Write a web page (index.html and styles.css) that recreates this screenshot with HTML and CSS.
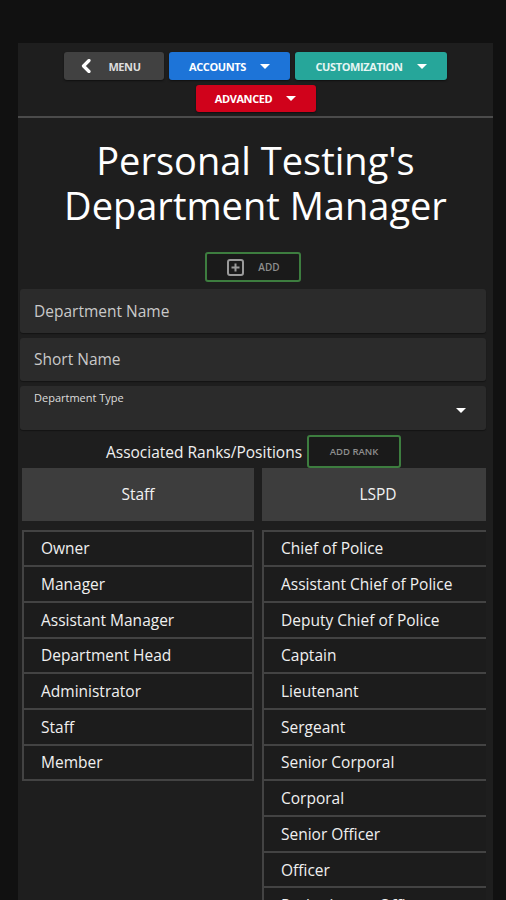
FILE: index.html
```html
<!DOCTYPE html>
<html>
	<head>
		<meta charset="utf-8" />
		<title>Department Manager</title>
		<link rel="stylesheet" href="styles.css">
	</head>
	<body>
		<div class="panel">
			<div class="nav">
				<div class="navBtn menu">
					<svg class="chev" width="10" height="14" viewBox="0 0 10 14"><path d="M8 1.5 L2.5 7 L8 12.5" fill="none" stroke="#fff" stroke-width="3.2" stroke-linejoin="round" stroke-linecap="round"/></svg>
					<span>Menu</span>
				</div>
				<div class="navBtn accounts"><span>Accounts</span><i class="caret"></i></div>
				<div class="navBtn custom"><span>Customization</span><i class="caret"></i></div>
				<div class="navBtn advanced"><span>Advanced</span><i class="caret"></i></div>
			</div>
			<div class="rule"></div>
			<h1 class="title">Personal Testing's<br>Department Manager</h1>
			<div class="addRow">
				<div class="addBtn">
					<svg width="17" height="17" viewBox="0 0 17 17"><rect x="1" y="1" width="15" height="15" rx="2" fill="none" stroke="#9a9a9a" stroke-width="2"/><path d="M8.5 4.5 V12.5 M4.5 8.5 H12.5" stroke="#9a9a9a" stroke-width="2"/></svg>
					<span>Add</span>
				</div>
			</div>
			<div class="fields">
				<div class="field">Department Name</div>
				<div class="field">Short Name</div>
				<div class="field select">
					<span class="label">Department Type</span>
					<i class="caret"></i>
				</div>
			</div>
			<div class="ranksRow">
				<span>Associated Ranks/Positions</span>
				<div class="rankBtn">Add Rank</div>
			</div>
			<div class="columns">
				<div class="col">
					<div class="colHead">Staff</div>
					<div class="list">
						<div class="item">Owner</div>
						<div class="item">Manager</div>
						<div class="item">Assistant Manager</div>
						<div class="item">Department Head</div>
						<div class="item">Administrator</div>
						<div class="item">Staff</div>
						<div class="item">Member</div>
					</div>
				</div>
				<div class="col">
					<div class="colHead">LSPD</div>
					<div class="list">
						<div class="item">Chief of Police</div>
						<div class="item">Assistant Chief of Police</div>
						<div class="item">Deputy Chief of Police</div>
						<div class="item">Captain</div>
						<div class="item">Lieutenant</div>
						<div class="item">Sergeant</div>
						<div class="item">Senior Corporal</div>
						<div class="item">Corporal</div>
						<div class="item">Senior Officer</div>
						<div class="item">Officer</div>
						<div class="item">Probationary Officer</div>
						<div class="item">Cadet</div>
					</div>
				</div>
			</div>
		</div>
	</body>
</html>
```

FILE: styles.css
```css
*,
*::before,
*::after{
	box-sizing: border-box;
}
html,body{
	margin: 0;
	background: #111111;
	font-family: "Open Sans", "Noto Sans", sans-serif;
	color: #eeeeee;
}
.panel{
	width: 475px;
	margin: 43px 0 0 18px;
	background: #1e1e1e;
	padding-bottom: 40px;
}
.nav{
	display: flex;
	flex-wrap: wrap;
	justify-content: center;
	gap: 5px;
	padding: 9px 40px 0;
}
.navBtn{
	height: 28px;
	border-radius: 3px;
	display: flex;
	align-items: center;
	justify-content: center;
	gap: 14px;
	font-size: 11px;
	font-weight: 700;
	text-transform: uppercase;
	letter-spacing: -0.4px;
	color: #ffffff;
	box-shadow: 0 1px 2px rgba(0,0,0,.5);
}
.navBtn.menu{
	width: 100px;
	background: #414141;
	color: #dddddd;
	gap: 17px;
	padding-right: 6px;
}
.navBtn.accounts{
	width: 121px;
	background: #1d74d8;
}
.navBtn.custom{
	width: 152px;
	background: #26a69a;
	color: #e6f5f3;
}
.navBtn.advanced{
	width: 120px;
	height: 27px;
	background: #d0021b;
}
.caret{
	display: inline-block;
	width: 0;
	height: 0;
	border-left: 5px solid transparent;
	border-right: 5px solid transparent;
	border-top: 5px solid #ffffff;
}
.rule{
	height: 2px;
	background: #4b4b4b;
	margin-top: 4px;
}
.title{
	margin: 20px 0 0;
	text-align: center;
	font-size: 38px;
	line-height: 45px;
	font-weight: 400;
	color: #ffffff;
}
.addRow{
	display: flex;
	justify-content: center;
	margin-top: 24px;
	padding-right: 6px;
}
.addBtn{
	width: 96px;
	height: 30px;
	border: 2px solid #3d7d3f;
	border-radius: 3px;
	background: #1a1a1a;
	display: flex;
	align-items: center;
	justify-content: center;
	gap: 14px;
	padding-left: 2px;
	font-size: 10px;
	font-weight: 600;
	text-transform: uppercase;
	color: #8e8e8e;
}
.fields{
	display: flex;
	flex-direction: column;
	gap: 5px;
	margin: 7px 7px 0 2px;
}
.field{
	height: 43.5px;
	background: #2b2b2b;
	border-radius: 3px;
	padding-left: 14px;
	display: flex;
	align-items: center;
	font-size: 15.5px;
	color: #c9c9c9;
	box-shadow: 0 1px 1px rgba(0,0,0,.35);
}
.field.select{
	position: relative;
	align-items: flex-start;
	justify-content: space-between;
	padding: 4px 20px 0 14px;
}
.field.select .label{
	font-size: 11px;
	font-weight: 500;
	color: #dddddd;
}
.field.select .caret{
	margin-top: 18px;
}
.ranksRow{
	display: flex;
	justify-content: center;
	align-items: center;
	gap: 5px;
	margin-top: 5px;
	padding-right: 4px;
	font-size: 15.5px;
	font-weight: 500;
	color: #f0f0f0;
}
.ranksRow span{
	padding-top: 2px;
}
.rankBtn{
	width: 94px;
	height: 33px;
	border: 2px solid #3d7d3f;
	border-radius: 3px;
	background: #1a1a1a;
	display: flex;
	align-items: center;
	justify-content: center;
	font-size: 9.5px;
	font-weight: 600;
	text-transform: uppercase;
	color: #8e8e8e;
}
.columns{
	display: flex;
	gap: 8px;
	margin: 0 7px 0 2px;
	padding-left: 2px;
	overflow: hidden;
}
.col{
	flex: 0 0 232px;
}
.colHead{
	height: 53px;
	background: #3d3d3d;
	display: flex;
	align-items: center;
	justify-content: center;
	font-size: 15.5px;
	font-weight: 500;
	color: #f2f2f2;
}
.list{
	margin-top: 9px;
	border: 2px solid #434343;
	background: #1c1c1c;
}
.item{
	height: 35.7px;
	padding-left: 17px;
	display: flex;
	align-items: center;
	font-size: 15.5px;
	font-weight: 500;
	color: #f0f0f0;
	border-top: 2px solid #434343;
}
.item:first-child{
	border-top: none;
	height: 33.7px;
}
```
